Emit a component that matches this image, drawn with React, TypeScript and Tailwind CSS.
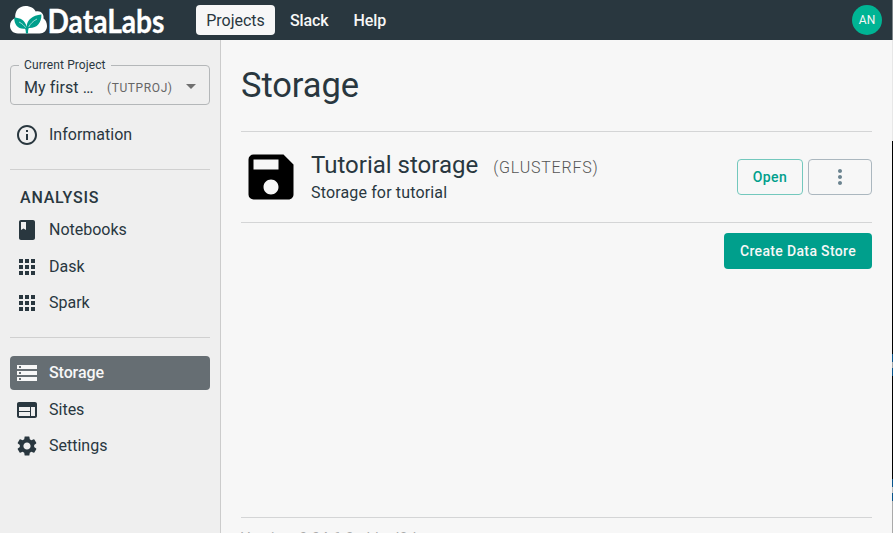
import type { ReactNode } from "react";
import {
  MdApps,
  MdArrowDropDown,
  MdBook,
  MdInfoOutline,
  MdMoreVert,
  MdSave,
  MdSettings,
  MdStorage,
} from "react-icons/md";

function Logo() {
  return (
    <svg width="158" height="40" viewBox="0 -3 158 40" className="block shrink-0">
      <path
        d="M8 30.500C3 30.500 0 27.200 0 22.800c0-3.800 2-6.700 5.300-7.900C4.500 8 9 3 15.500 3c5 0 8.600 2.300 10.200 5.500C30.500 7 34.300 11 33.500 15.400 35.600 17 37 19.500 37 23c0 4.500-3 7.500-7.500 7.500z"
        fill="#fff"
      />
      <path
        d="M4.300 14.500c6 .3 11 2.800 12.300 9.300.5-7 5.500-11.300 14.800-12.300.2 8.500-4.600 14-12.600 13.500-.7 1.700-.8 3.200-.7 5.500h-2.200c0-1.800-.2-3.600-.8-4.800C8.500 26.700 4 22 4.300 14.500z"
        fill="#009f8c"
      />
      <path d="M9 19c3.500 1.700 5 3.500 6.700 5.700M27 16c-4 2-6.500 4.700-8.300 8" fill="none" stroke="#fff" strokeWidth=".6" />
      <text
        x="37.500"
        y="30"
        textLength="117"
        lengthAdjust="spacingAndGlyphs"
        fill="#fff"
        stroke="#fff"
        strokeWidth=".3"
        fontFamily="Lato, sans-serif"
        fontWeight="700"
        fontSize="33"
      >
        DataLabs
      </text>
    </svg>
  );
}

function SitesIcon() {
  return (
    <svg width="24" height="24" viewBox="0 0 24 24" fill="currentColor">
      <path d="M20 4H4c-1.100 0-1.990.9-1.990 2L2 18c0 1.100.9 2 2 2h16c1.100 0 2-.9 2-2V6c0-1.100-.9-2-2-2zm-5 14H4v-4h11v4zm0-5H4V9h11v4zm5 5h-4V9h4v9z" />
    </svg>
  );
}

function NavItem({ icon, label, active = false }: { icon: ReactNode; label: string; active?: boolean }) {
  return (
    <a
      className={
        active
          ? "flex h-[34px] items-center rounded bg-[#666e73] pl-[5px] text-[#f7f7f7]"
          : "flex h-[34px] items-center pl-[5px]"
      }
    >
      <span className="mr-2.5 text-2xl">{icon}</span>
      <span className={active ? "text-base font-medium tracking-[-0.1px]" : "text-base"}>{label}</span>
    </a>
  );
}

function Header() {
  return (
    <header className="flex h-10 shrink-0 items-center bg-[#29373f] px-2.5 text-[#f7f7f7]">
      <Logo />
      <nav className="ml-7 flex text-base font-medium">
        <a className="flex h-[30px] w-[79px] items-center justify-center rounded bg-[#f7f7f7] pt-px font-normal text-[#29373f]">
          Projects
        </a>
        <a className="ml-[15px] flex h-[30px] items-center pt-px tracking-[-0.1px]">Slack</a>
        <a className="ml-[25px] flex h-[30px] items-center pt-px tracking-[-0.1px]">Help</a>
      </nav>
      <div className="ml-auto flex size-[30px] items-center justify-center rounded-full bg-[#00b494] text-xs">AN</div>
    </header>
  );
}

function Sidebar() {
  return (
    <aside className="w-[221px] shrink-0 border-r border-[#ccc] bg-[#efefef] px-2.5 pt-[18px]">
      <fieldset className="h-[47px] rounded border border-[#b4b7b9] pr-1.5 pl-2">
        <legend className="h-[14px] px-[5px] text-xs leading-[14px] tracking-[0.1px]">Current Project</legend>
        <div className="flex h-8 items-center pl-[5px]">
          <span className="w-[83px] text-base tracking-[0.1px]">My first …</span>
          <span className="text-xs tracking-[0.600px] text-[#666]">(TUTPROJ)</span>
          <MdArrowDropDown className="-mt-1 ml-auto text-2xl text-[#707070]" />
        </div>
      </fieldset>
      <div className="mt-[13px] border-b border-[#d0d0d0] pb-[17px]">
        <NavItem icon={<MdInfoOutline />} label="Information" />
      </div>
      <div className="border-b border-[#d0d0d0] pt-4 pb-[17px]">
        <h2 className="mb-[3px] pl-2.5 text-base leading-6 font-medium tracking-[0.8px]">ANALYSIS</h2>
        <div className="flex flex-col gap-[2.500px]">
          <NavItem icon={<MdBook />} label="Notebooks" />
          <NavItem icon={<MdApps />} label="Dask" />
          <NavItem icon={<MdApps />} label="Spark" />
        </div>
      </div>
      <div className="flex flex-col gap-[2.500px] pt-[18px]">
        <NavItem icon={<MdStorage />} label="Storage" active />
        <NavItem icon={<SitesIcon />} label="Sites" />
        <NavItem icon={<MdSettings />} label="Settings" />
      </div>
    </aside>
  );
}

function Content() {
  return (
    <main className="flex min-w-0 flex-1 flex-col px-5">
      <h1 className="flex h-[91px] items-center text-[34.500px] tracking-[-0.1px]">Storage</h1>
      <section className="flex h-[92px] items-center border-y border-[#d4d5d6]">
        <MdSave className="size-[60px] shrink-0 text-black" />
        <div className="ml-2.5 flex-1 pb-px">
          <div className="flex items-center">
            <h2 className="text-2xl leading-8">Tutorial storage</h2>
            <span className="mt-1.5 ml-[15px] text-base font-light tracking-[0.8px] text-[#555]">(GLUSTERFS)</span>
          </div>
          <p className="mt-px text-base leading-[22px] tracking-[0.15px]">Storage for tutorial</p>
        </div>
        <button className="mr-[5px] h-9 w-[66px] rounded border border-[#73c8bd] text-sm font-medium tracking-[0.400px] text-[#009f8c]">
          Open
        </button>
        <button className="flex h-9 w-16 items-center justify-center rounded border border-[#abb7bf] text-2xl text-[#6c8490]">
          <MdMoreVert />
        </button>
      </section>
      <button className="mt-2.5 h-9 w-[148px] self-end rounded bg-[#009f8c] text-sm font-medium tracking-[0.350px] text-[#f7f7f7]">
        Create Data Store
      </button>
      <footer className="mt-auto h-4 overflow-hidden border-t border-[#d4d5d6] pt-2.5 text-sm leading-5 tracking-[0.5px] text-[#aaa]">
        Version: 0.34.6-3-gbbcd0d
      </footer>
    </main>
  );
}

function WindowEdge() {
  return (
    <div className="flex w-px shrink-0 flex-col bg-black">
      <div className="h-10 bg-[#7e868a]" />
      <div className="h-[101px] bg-[#e7e7e7]" />
      <div className="mt-[213px] h-[22px] border-y-8 border-[#08548b] bg-[#a1a4a7]" />
      <div className="mt-[103px] h-[22px] border-y-8 border-[#08548b] bg-[#b8b8b8]" />
      <div className="flex-1 bg-[#aaa]" />
    </div>
  );
}

export default function App() {
  return (
    <div className="flex h-screen w-screen overflow-hidden bg-[#f7f7f7] font-['Roboto',sans-serif] text-[#29373f]">
      <div className="flex min-w-0 flex-1 flex-col">
        <Header />
        <div className="flex min-h-0 flex-1">
          <Sidebar />
          <Content />
        </div>
      </div>
      <WindowEdge />
    </div>
  );
}
